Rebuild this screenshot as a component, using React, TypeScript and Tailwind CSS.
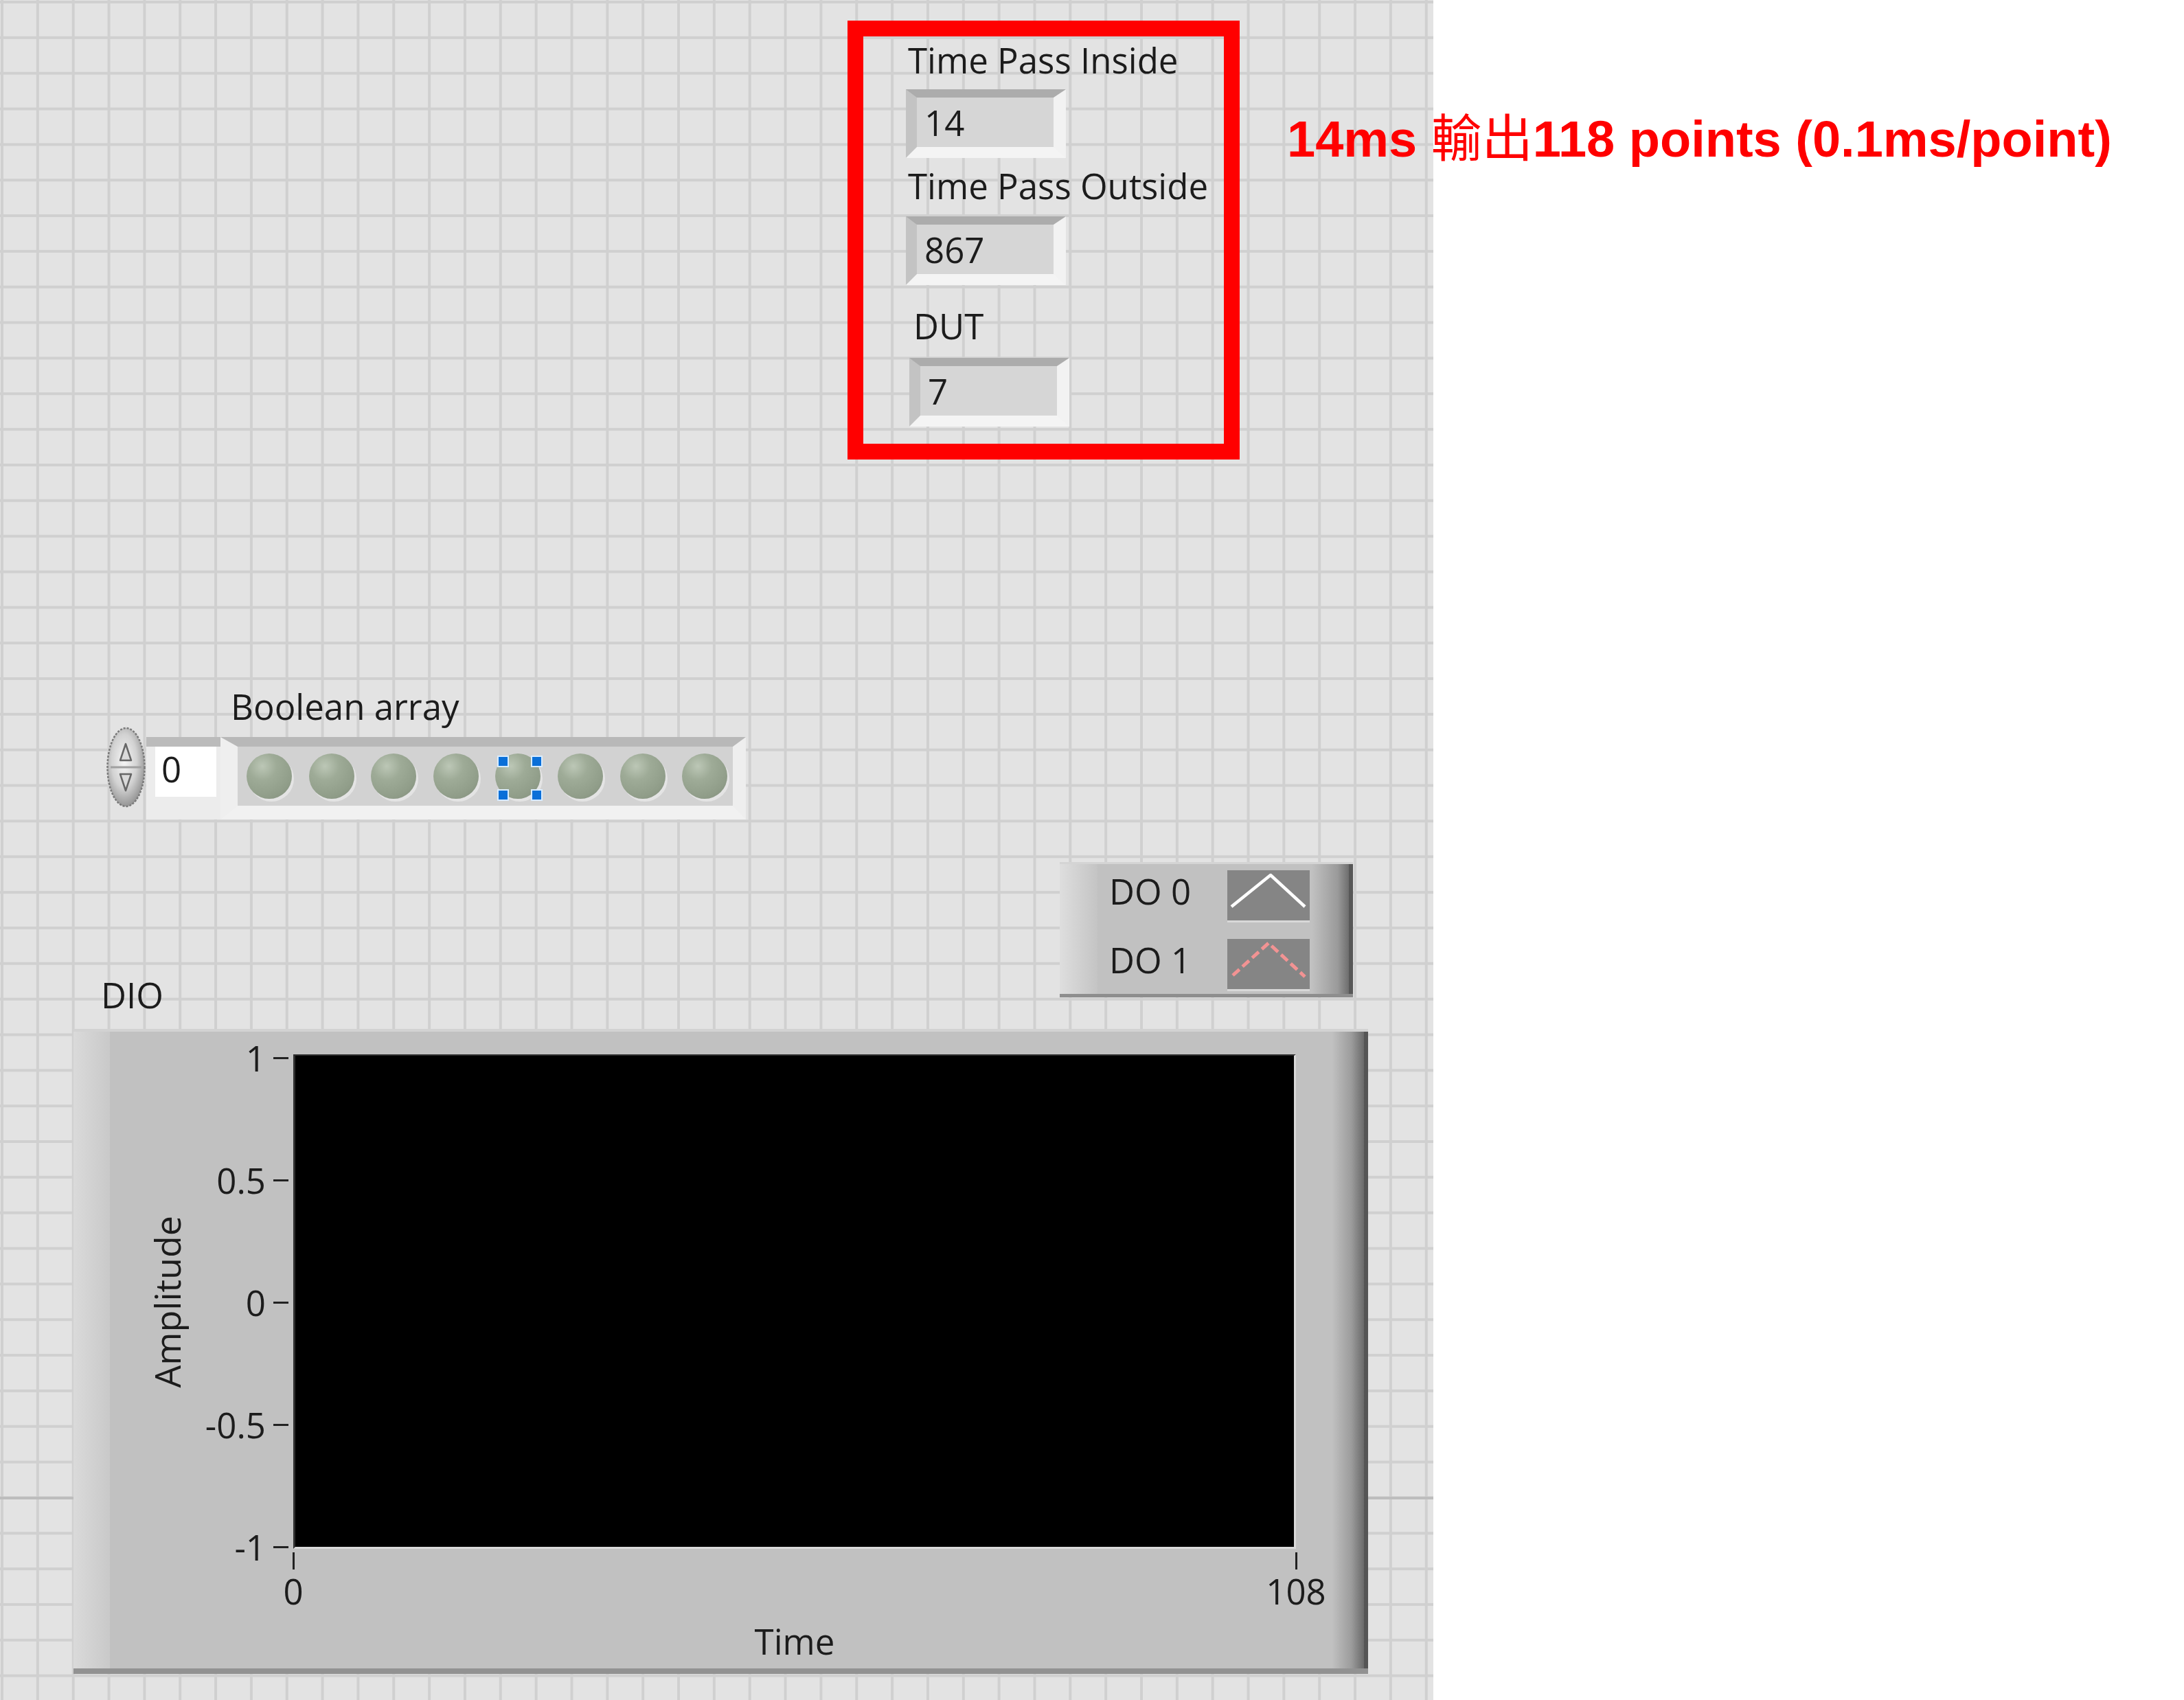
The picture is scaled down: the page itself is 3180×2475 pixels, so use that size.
import React from "react";

const LABEL = "font-['Open_Sans',sans-serif] text-[51px] leading-none text-[#1c1c1c] whitespace-nowrap";

function NumIndicator({ value }: { value: string }) {
  return (
    <div className="w-[233px] h-[100px] border-t-[12px] border-l-[16px] border-r-[18px] border-b-[16px] border-t-[#acacac] border-l-[#c3c3c3] border-r-[#f2f2f2] border-b-[#f4f4f4] bg-[#d6d6d6] pl-[11px] pt-[11px]">
      <span className={LABEL}>{value}</span>
    </div>
  );
}

function Control({ label, value, left, top, gap, labelOffset }: { label: string; value: string; left: number; top: number; gap: number; labelOffset: number }) {
  return (
    <div className="absolute flex flex-col" style={{ left, top }}>
      <span className={LABEL} style={{ marginLeft: labelOffset }}>{label}</span>
      <div style={{ marginTop: gap }}>
        <NumIndicator value={value} />
      </div>
    </div>
  );
}

function Led({ selected }: { selected?: boolean }) {
  return (
    <div className="relative size-[66px] shrink-0 rounded-full bg-[radial-gradient(circle_at_35%_28%,#bcc7b6_0%,#9eab97_32%,#909d89_70%,#7f8b79_100%)] shadow-[3px_4px_0_0_#e4e4e4]">
      {selected && (
        <>
          <span className="absolute left-[3px] top-[3px] size-[17px] bg-[#0a6fd8] border-2 border-[#d8ecff]" />
          <span className="absolute left-[52px] top-[3px] size-[17px] bg-[#0a6fd8] border-2 border-[#d8ecff]" />
          <span className="absolute left-[3px] top-[52px] size-[17px] bg-[#0a6fd8] border-2 border-[#d8ecff]" />
          <span className="absolute left-[52px] top-[52px] size-[17px] bg-[#0a6fd8] border-2 border-[#d8ecff]" />
        </>
      )}
    </div>
  );
}

function Spinner() {
  return (
    <svg width="59" height="120" viewBox="0 0 59 120" className="-mt-[16px] shrink-0">
      <defs>
        <radialGradient id="spin" cx="45%" cy="42%" r="62%">
          <stop offset="0" stopColor="#f6f6f6" />
          <stop offset="0.55" stopColor="#d2d2d2" />
          <stop offset="1" stopColor="#8c8c8c" />
        </radialGradient>
      </defs>
      <ellipse cx="29.5" cy="60" rx="27" ry="57" fill="url(#spin)" stroke="#7a7a7a" strokeWidth="2.5" strokeDasharray="3 2" />
      <line x1="7" y1="60" x2="52" y2="60" stroke="#a0a0a0" strokeWidth="3" />
      <polygon points="29,26 21,50 37,50" fill="#dadada" stroke="#666" strokeWidth="2.5" strokeLinejoin="round" />
      <polygon points="21,70 37,70 29,94" fill="#dadada" stroke="#666" strokeWidth="2.5" strokeLinejoin="round" />
    </svg>
  );
}

function BooleanArray() {
  return (
    <div className="absolute left-[154px] top-[1003px] flex flex-col">
      <span className={`${LABEL} ml-[182px]`}>Boolean array</span>
      <div className="mt-[19px] flex items-start">
        <Spinner />
        <div className="w-[108px] h-[120px] border-t-[14px] border-t-[#bbbbbb] bg-[#ececec] pl-[13px]">
          <div className="w-[89px] h-[73px] bg-white pl-[9px] pt-[7px]">
            <span className={LABEL}>0</span>
          </div>
        </div>
        <div className="w-[765px] h-[120px] border-t-[14px] border-l-[25px] border-r-[19px] border-b-[20px] border-t-[#b8b8b8] border-l-[#efefef] border-r-[#eeeeee] border-b-[#f1f1f1] bg-[#d2d2d2] flex items-center pl-[13px] gap-[24.6px]">
          {[0, 1, 2, 3, 4, 5, 6, 7].map((i) => (
            <Led key={i} selected={i === 4} />
          ))}
        </div>
      </div>
    </div>
  );
}

function Legend() {
  return (
    <div className="absolute left-[1543px] top-[1255px] w-[427px] h-[197px] flex bg-[#c1c1c1] border-t-[3px] border-t-[#d4d4d4] border-b-[5px] border-b-[#8e8e8e]">
      <div className="w-[55px] bg-[linear-gradient(to_right,#dedede,#c4c4c4)]" />
      <div className="flex-1 flex flex-col pt-[9px] gap-[24px]">
        <div className="h-[76px] flex justify-between items-start">
          <span className={`${LABEL} ml-[17px] mt-[5px]`}>DO 0</span>
          <div className="w-[120px] h-[76px] mr-[3px] bg-[#858585] border-b-[3px] border-b-[#d8d8d8]">
            <svg width="120" height="73" viewBox="0 0 120 73">
              <polyline points="6,53 63,7 113,53" fill="none" stroke="#ffffff" strokeWidth="4.5" strokeLinejoin="round" />
            </svg>
          </div>
        </div>
        <div className="h-[76px] flex justify-between items-start">
          <span className={`${LABEL} ml-[17px] mt-[5px]`}>DO 1</span>
          <div className="w-[120px] h-[76px] mr-[3px] bg-[#858585] border-b-[3px] border-b-[#d8d8d8]">
            <svg width="120" height="73" viewBox="0 0 120 73">
              <polyline points="8,53 60,6 113,55" fill="none" stroke="#f29393" strokeWidth="5" strokeDasharray="13 6" />
            </svg>
          </div>
        </div>
      </div>
      <div className="w-[60px] bg-[linear-gradient(to_right,#c1c1c1,#9a9a9a_70%,#6e6e6e)] border-r-[6px] border-r-[#585858]" />
    </div>
  );
}

function Graph() {
  const yTicks = ["1", "0.5", "0", "-0.5", "-1"];
  return (
    <div className="absolute left-[107px] top-[1423px] flex flex-col">
      <span className={`${LABEL} ml-[40px]`}>DIO</span>
      <div className="mt-[24px] w-[1885px] h-[939px] flex bg-[#c1c1c1] border-t-[4px] border-t-[#d2d2d2] border-b-[8px] border-b-[#929292]">
        <div className="w-[53px] bg-[linear-gradient(to_right,#dadada,#c9c9c9)]" />
        <div className="w-[127px] pt-[33px]">
          <div className="h-[720px] flex items-center justify-end pr-[18px]">
            <span className={`${LABEL} text-[52px] [writing-mode:vertical-rl] rotate-180`}>Amplitude</span>
          </div>
        </div>
        <div className="w-[140px] pt-[13px]">
          <div className="h-[762px] flex flex-col justify-between">
            {yTicks.map((t) => (
              <div key={t} className="h-[50px] flex items-center">
                <span className={`${LABEL} text-[50px] w-[100px] text-right`}>{t}</span>
                <span className="ml-[11px] w-[22px] h-[3px] bg-[#222]" />
              </div>
            ))}
          </div>
        </div>
        <div className="w-[1460px] pt-[33px] flex flex-col">
          <div className="h-[720px] bg-black border-l-[3px] border-t-[2px] border-l-[#2e2e2e] border-t-[#2e2e2e] border-b-[3px] border-r-[3px] border-b-[#d9d9d9] border-r-[#d9d9d9]" />
          <div className="flex justify-between">
            {["0", "108"].map((t) => (
              <div key={t} className="w-0 flex flex-col items-center">
                <span className="mt-[5px] w-[3px] h-[25px] bg-[#222]" />
                <span className={`${LABEL} text-[50px] mt-[6px]`}>{t}</span>
              </div>
            ))}
          </div>
          <div className="mt-[22px] flex justify-center">
            <span className={LABEL}>Time</span>
          </div>
        </div>
        <div className="flex-1" />
        <div className="w-[52px] bg-[linear-gradient(to_right,#c0c0c0,#9c9c9c_60%,#6a6a6a)] border-r-[6px] border-r-[#555]" />
      </div>
    </div>
  );
}

export default function App() {
  return (
    <div className="w-[3180px] h-[2475px] bg-white flex relative overflow-hidden">
      {/* LabVIEW front panel */}
      <div className="relative w-[2087px] h-[2475px] bg-[#e3e3e3] bg-[linear-gradient(to_right,#d0d0d0_4px,transparent_4px),linear-gradient(to_bottom,#d0d0d0_4px,transparent_4px)] bg-[length:51.85px_51.85px] bg-[position:1px_1px]">
        <div className="absolute left-0 top-[2179px] w-full h-[4px] bg-[#bdbdbd]" />

        <div className="absolute left-[1234px] top-[30px] w-[571px] h-[639px] border-[23px] border-[#ff0000]" />
        <Control label="Time Pass Inside" value="14" left={1319} top={62} gap={17} labelOffset={3} />
        <Control label="Time Pass Outside" value="867" left={1319} top={245} gap={19} labelOffset={3} />
        <Control label="DUT" value="7" left={1324} top={449} gap={21} labelOffset={6} />

        <BooleanArray />
        <Legend />
        <Graph />
      </div>

      {/* annotation */}
      <div className="absolute left-[1874px] top-[159px] font-['Liberation_Sans','Noto_Sans_CJK_TC',sans-serif] font-bold text-[74px] leading-none text-[#ff0000] whitespace-nowrap">
        14ms <span className="font-['Noto_Sans_CJK_TC',sans-serif] font-normal">輸出</span>118 points (0.1ms/point)
      </div>
    </div>
  );
}
